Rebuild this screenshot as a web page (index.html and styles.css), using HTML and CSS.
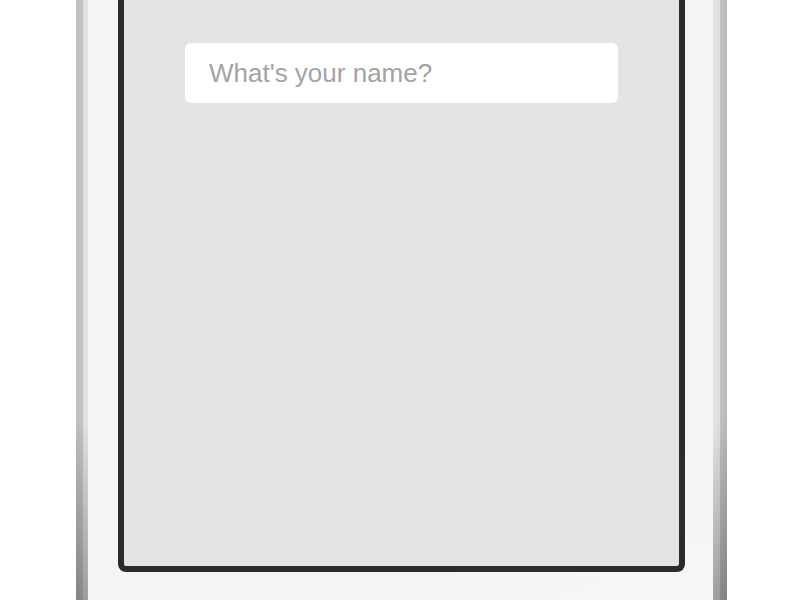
FILE: index.html
```html
<!DOCTYPE html>
<html>
<head>
<meta charset="utf-8">
<link rel="stylesheet" href="styles.css">
</head>
<body>
<div class="phone">
  <div class="edge edge-left"></div>
  <div class="body">
    <div class="screen">
      <input class="name-input" type="text" placeholder="What's your name?">
    </div>
  </div>
  <div class="edge edge-right"></div>
</div>
</body>
</html>
```

FILE: styles.css
```css
html, body {
  margin: 0;
  padding: 0;
  background: #ffffff;
  overflow: hidden;
}
.phone {
  margin-left: 76px;
  width: 651px;
  height: 600px;
  display: flex;
}
.edge {
  flex: none;
}
.edge-left {
  width: 12px;
  background:
    linear-gradient(to bottom, rgba(0,0,0,0) 0%, rgba(0,0,0,0) 70%, rgba(0,0,0,0.3) 100%),
    linear-gradient(to right, #bcbcbc 0, #c4c4c4 7px, #dddddd 7px, #e4e4e4 12px);
}
.edge-right {
  width: 14px;
  background:
    linear-gradient(to bottom, rgba(0,0,0,0) 0%, rgba(0,0,0,0) 70%, rgba(0,0,0,0.3) 100%),
    linear-gradient(to right, #e6e6e8 0, #dedede 7px, #c2c2c2 7px, #b8b8b8 14px);
}
.body {
  flex: 1;
  background: linear-gradient(160deg, #f3f4f6 0%, #f3f4f6 80%, #f6f7f9 100%);
  padding-left: 30px;
  padding-right: 28px;
}
.screen {
  box-sizing: border-box;
  height: 572px;
  background: #e4e4e4;
  border: 6px solid #2b2b2b;
  border-top: 0;
  border-radius: 0 0 8px 8px;
  padding: 43px 61px 0 61px;
}
.name-input {
  display: block;
  box-sizing: border-box;
  width: 100%;
  height: 60px;
  margin: 0;
  border: 0;
  outline: none;
  border-radius: 6px;
  background: #ffffff;
  padding: 0 0 0 24px;
  font-family: "Liberation Sans", Arial, sans-serif;
  font-size: 26px;
  color: #333333;
}
.name-input::placeholder {
  color: #a3a3a3;
  opacity: 1;
}
```
